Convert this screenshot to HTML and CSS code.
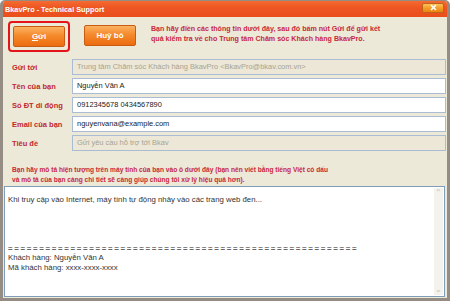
FILE: index.html
```html
<!DOCTYPE html>
<html>
  <head>
    <meta charset="utf-8">
    <title>BkavPro - Technical Support</title>
    <link rel="stylesheet" href="styles.css">
  </head>
  <body>
    <div class="window">
      <div class="titlebar">
        <span class="title">BkavPro - Technical Support</span>
        <span class="close-btn">
          <svg width="9" height="7" viewBox="0 0 9 7">
            <path d="M2 1 L7 6 M7 1 L2 6" stroke="#fff" stroke-width="1.6" />
          </svg>
        </span>
      </div>

      <div class="content">
        <div class="toolbar">
          <div class="focus-ring">
            <button class="btn"><u>G</u>ửi</button>
          </div>
          <button class="btn">Huỷ bỏ</button>
          <p class="notice">
            Bạn hãy điền các thông tin dưới đây, sau đó bấm nút Gửi để gửi kết<br>
            quả kiểm tra về cho Trung tâm Chăm sóc Khách hàng BkavPro.
          </p>
        </div>

        <div class="form">
          <div class="row">
            <label>Gửi tới</label>
            <div class="field readonly">Trung tâm Chăm sóc Khách hàng BkavPro &lt;BkavPro@bkav.com.vn&gt;</div>
          </div>
          <div class="row">
            <label>Tên của bạn</label>
            <div class="field">Nguyễn Văn A</div>
          </div>
          <div class="row">
            <label>Số ĐT di động</label>
            <div class="field">0912345678 0434567890</div>
          </div>
          <div class="row">
            <label>Email của bạn</label>
            <div class="field">nguyenvana@example.com</div>
          </div>
          <div class="row">
            <label>Tiêu đề</label>
            <div class="field readonly">Gửi yêu cầu hỗ trợ tới Bkav</div>
          </div>
        </div>

        <p class="hint">
          Bạn hãy mô tả hiện tượng trên máy tính của bạn vào ô dưới đây (bạn nên viết bằng tiếng Việt có dấu<br>
          và mô tả của bạn càng chi tiết sẽ càng giúp chúng tôi xử lý hiệu quả hơn).
        </p>

        <div class="editor">
          <div class="editor-text">Khi truy cập vào Internet, máy tính tự động nhảy vào các trang web đen...




<span class="rule">========================================================</span>
Khách hàng: Nguyễn Văn A
Mã khách hàng: xxxx-xxxx-xxxx</div>
          <div class="scrollbar">
            <span class="arrow">&#8963;</span>
            <span class="arrow">&#8964;</span>
          </div>
        </div>
      </div>
    </div>
  </body>
</html>
```

FILE: styles.css
```css
:root {
  --frame: #958d84;
  --face: #ece9d8;
  --label-red: #c1272d;
  --field-border: #a9bcd4;
}

* {
  box-sizing: border-box;
}

body {
  margin: 0;
  font-family: "Liberation Sans", Arial, sans-serif;
  font-size: 8px;
  color: #222;
}

.window {
  width: 450px;
  height: 301px;
  display: flex;
  flex-direction: column;
  background: var(--face);
  border: 3px solid var(--frame);
  border-top-width: 1px;
  border-radius: 5px 5px 0 0;
  overflow: hidden;
}

.titlebar {
  height: 16px;
  display: flex;
  align-items: center;
  justify-content: space-between;
  padding: 0 3px 0 2px;
  background: linear-gradient(#f46c33, #ee5622 40%, #e94e1b);
}

.title {
  color: #fff;
  font-weight: bold;
  font-size: 7.3px;
}

.close-btn {
  width: 22px;
  height: 10px;
  display: flex;
  align-items: center;
  justify-content: center;
  margin-top: -3px;
  border: 1px solid #c0631d;
  border-radius: 2px;
  background: linear-gradient(#fbc25a, #f39b25 55%, #ec8412);
}

.content {
  flex: 1;
  display: flex;
  flex-direction: column;
  padding: 0 0 0 1px;
}

.toolbar {
  display: flex;
  align-items: flex-start;
  gap: 14px;
  padding: 4px 0 0 4px;
  height: 41px;
}

.focus-ring {
  padding: 3px;
  border: 2px solid #e3151a;
  border-radius: 4px;
}

.btn {
  width: 52px;
  height: 21px;
  padding: 0;
  border: 1px solid #c75c12;
  border-radius: 2px;
  background: linear-gradient(#fbb263, #f58a2c 45%, #ec6c10);
  color: #fff;
  font-family: inherit;
  font-size: 8px;
  font-weight: bold;
  margin-top: 4px;
}

.focus-ring .btn {
  margin-top: 0;
}

.notice {
  margin: 3px 0 0 1px;
  color: #c8283c;
  font-weight: bold;
  font-size: 7.1px;
  line-height: 10px;
}

.form {
  display: flex;
  flex-direction: column;
  gap: 3px;
  padding-top: 1px;
}

.row {
  display: flex;
  align-items: center;
  height: 16px;
}

.row label {
  width: 68px;
  padding-left: 8px;
  color: var(--label-red);
  font-weight: bold;
  font-size: 7.5px;
}

.field {
  flex: 1;
  height: 16px;
  margin-right: 1px;
  padding: 0 4px;
  border: 1px solid var(--field-border);
  background: #fff;
  line-height: 14px;
  font-size: 7.45px;
  white-space: nowrap;
  overflow: hidden;
}

.field.readonly {
  background: #ece7d6;
  color: #a8a392;
}

.hint {
  margin: 14px 0 0 8px;
  color: #c8283c;
  font-weight: bold;
  font-size: 6.6px;
  line-height: 10px;
}

.editor {
  flex: 1;
  display: flex;
  margin: 1px 2px 1px 0;
  border: 1px solid #7f9db9;
  background: #fff;
}

.editor-text {
  flex: 1;
  padding: 8px 3px;
  white-space: pre;
  font-size: 7.8px;
  line-height: 9.7px;
  color: #333;
}

.rule {
  color: #666;
  letter-spacing: 1.7px;
  font-weight: bold;
}

.scrollbar {
  width: 9px;
  margin: 1px 1px 1px 0;
  display: flex;
  flex-direction: column;
  justify-content: space-between;
  align-items: center;
  background: #f3f2ec;
  color: #c4c1b6;
  font-size: 8px;
  line-height: 10px;
}
```
